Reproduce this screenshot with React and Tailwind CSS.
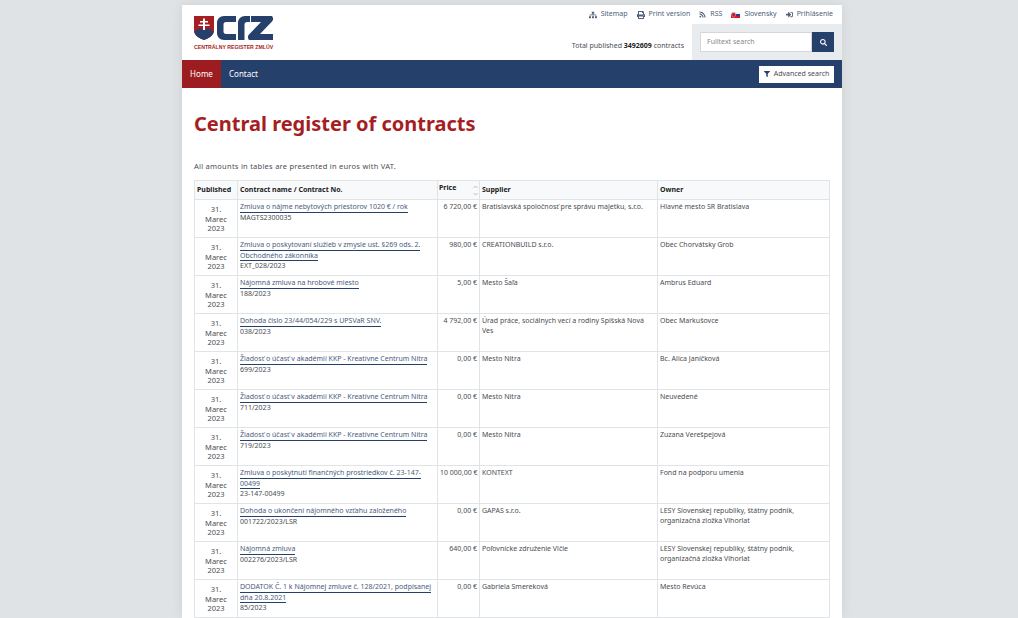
import React from 'react';
import { FaSitemap, FaPrint, FaRss, FaSignInAlt, FaSearch, FaFilter } from 'react-icons/fa';

const ROWS = [
  { name: ['Zmluva o nájme nebytových priestorov 1020 € / rok'], no: 'MAGTS2300035', price: '6 720,00 €', supplier: 'Bratislavská spoločnosť pre správu majetku, s.r.o.', owner: 'Hlavné mesto SR Bratislava' },
  { name: ['Zmluva o poskytovaní služieb v zmysle ust. §269 ods. 2.', 'Obchodného zákonníka'], no: 'EXT_028/2023', price: '980,00 €', supplier: 'CREATIONBUILD s.r.o.', owner: 'Obec Chorvátsky Grob' },
  { name: ['Nájomná zmluva na hrobové miesto'], no: '188/2023', price: '5,00 €', supplier: 'Mesto Šaľa', owner: 'Ambrus Eduard' },
  { name: ['Dohoda číslo 23/44/054/229 s UPSVaR SNV.'], no: '038/2023', price: '4 792,00 €', supplier: 'Úrad práce, sociálnych vecí a rodiny Spišská Nová Ves', owner: 'Obec Markušovce' },
  { name: ['Žiadosť o účasť v akadémií KKP - Kreatívne Centrum Nitra'], no: '699/2023', price: '0,00 €', supplier: 'Mesto Nitra', owner: 'Bc. Alica Janíčková' },
  { name: ['Žiadosť o účasť v akadémií KKP - Kreatívne Centrum Nitra'], no: '711/2023', price: '0,00 €', supplier: 'Mesto Nitra', owner: 'Neuvedené' },
  { name: ['Žiadosť o účasť v akadémií KKP - Kreatívne Centrum Nitra'], no: '719/2023', price: '0,00 €', supplier: 'Mesto Nitra', owner: 'Zuzana Verešpejová' },
  { name: ['Zmluva o poskytnutí finančných prostriedkov č. 23-147-', '00499'], no: '23-147-00499', price: '10 000,00 €', supplier: 'KONTEXT', owner: 'Fond na podporu umenia' },
  { name: ['Dohoda o ukončení nájomného vzťahu založeného'], no: '001722/2023/LSR', price: '0,00 €', supplier: 'GAPAS s.r.o.', owner: 'LESY Slovenskej republiky, štátny podnik, organizačná zložka Vihorlat' },
  { name: ['Nájomná zmluva'], no: '002276/2023/LSR', price: '640,00 €', supplier: 'Poľovnícke združenie Vlčie', owner: 'LESY Slovenskej republiky, štátny podnik, organizačná zložka Vihorlat' },
  { name: ['DODATOK Č. 1 k Nájomnej zmluve č. 128/2021, podpísanej', 'dňa 20.8.2021'], no: '85/2023', price: '0,00 €', supplier: 'Gabriela Smereková', owner: 'Mesto Revúca' },
];

const Logo = () => (
  <div className="w-[80px]">
    <svg width="80" height="26" viewBox="0 0 80 26" className="block">
      <path d="M0 0h20v14c0 6-5 8-10 10C5 22 0 20 0 14z" fill="#a51e22" />
      <path d="M0 15c3 0 4-2 5.500-3 1.500 0 3 2 4.500 2s3-2 4.500-2c1.500 1 2.500 3 5.500 3-1 5-5 7-10 9-5-2-9-4-10-9z" fill="#25406a" />
      <path d="M9 2.500h2v2.500h3v1.500h-3v2h4.500v1.500H11v4H9v-4H4.500V8.500H9v-2H6V5h3z" fill="#fff" />
      <path d="M42 0H30c-4 0-7 3-7 7v10c0 4 3 7 7 7h12v-6H32c-1.500 0-2.500-1-2.500-2.500v-7C29.500 7 30.500 6 32 6h10z" fill="#25406a" />
      <path d="M44 24V7c0-4 3-7 7-7h5v6h-3c-1.500 0-2.500 1-2.500 2.500V24z" fill="#25406a" />
      <path d="M57 0h21c1.500 2 1.500 4 0 5.500L66 18h13v6H55c-1.500-2-1.500-4 0-5.500L67 6H57z" fill="#25406a" />
    </svg>
    <div className="mt-[2px] text-[5.200px] font-bold leading-[7px] text-[#a51e22] whitespace-nowrap font-['Liberation_Sans',sans-serif]">CENTRÁLNY REGISTER ZMLÚV</div>
  </div>
);

const TopLink = ({ icon, children }) => (
  <a className="flex items-center gap-[4px] text-[#4f5f78]">
    {icon}
    <span>{children}</span>
  </a>
);

const Flag = () => (
  <svg width="9" height="6" viewBox="0 0 9 6" className="block">
    <rect width="9" height="2" fill="#f4f4f4" />
    <rect y="2" width="9" height="2" fill="#2a3f8f" />
    <rect y="4" width="9" height="2" fill="#d3162a" />
    <path d="M.8 .6h3.600v2.900C4.400 4.600 2.600 5.300 2.600 5.300S.8 4.600 .8 3.500z" fill="#d3162a" stroke="#fff" strokeWidth=".4" />
  </svg>
);

const SortIcon = () => (
  <svg width="5" height="11" viewBox="0 0 5 11" fill="none" stroke="#a9adb0" strokeWidth=".8" className="absolute right-[1px] top-[4px]">
    <path d="M.5 3 2.500 1 4.500 3M.5 8l2 2 2-2" />
  </svg>
);

const Row = ({ row }) => (
  <tr className="h-[38px]">
    <td className="border border-[#e0e4e6] px-[3px] pt-[5px] pb-0 align-top text-center text-[7.500px] leading-[9.500px]">
      31.<br />Marec<br />2023
    </td>
    <td className="border border-[#e0e4e6] px-[2px] pt-[2px] align-top leading-[10px]">
      {row.name.map((line) => (
        <div key={line} className="w-fit border-b border-[#25406a] leading-[9.500px] text-[#4a5d7e] whitespace-nowrap">{line}</div>
      ))}
      <div>{row.no}</div>
    </td>
    <td className="border border-[#e0e4e6] px-[2px] pt-[2px] align-top text-right leading-[10px] whitespace-nowrap">{row.price}</td>
    <td className="border border-[#e0e4e6] px-[2px] pt-[2px] align-top leading-[10px]">{row.supplier}</td>
    <td className="border border-[#e0e4e6] px-[2px] pt-[2px] align-top leading-[10px]">{row.owner}</td>
  </tr>
);

export default function App() {
  return (
    <div className="h-screen overflow-hidden bg-[#dfe3e6] pt-[5px] font-['Noto_Sans','Open_Sans',sans-serif] text-[7px] text-[#4a4d52] antialiased">
      <div className="ml-[182px] w-[660px] bg-white shadow-[0_0_12px_rgba(0,0,0,0.08)]">
        <header className="flex h-[55px] justify-between">
          <div className="pl-[12px] pt-[11px]"><Logo /></div>
          <div className="flex flex-col items-end">
            <div className="flex h-[19px] items-center gap-[9px] pr-[9px]">
              <TopLink icon={<FaSitemap className="h-[8px] w-[8px]" />}>Sitemap</TopLink>
              <TopLink icon={<FaPrint className="h-[8px] w-[8px]" />}>Print version</TopLink>
              <TopLink icon={<FaRss className="h-[7px] w-[7px]" />}>RSS</TopLink>
              <TopLink icon={<Flag />}>Slovensky</TopLink>
              <TopLink icon={<FaSignInAlt className="h-[7px] w-[7px]" />}>Prihlásenie</TopLink>
            </div>
            <div className="flex items-stretch">
              <div className="flex items-center pr-[8px] pt-[8px]">
                Total published&nbsp;<b className="text-[#222]">3492609</b>&nbsp;contracts
              </div>
              <div className="flex h-[36px] w-[150px] bg-[#e9ecef] pl-[8px] pt-[8px]">
                <div className="flex h-[20px] w-[112px] items-center border border-[#d4d8db] bg-white pl-[6px] text-[#888]">Fulltext search</div>
                <div className="flex h-[20px] w-[22px] items-center justify-center bg-[#25406a] text-white"><FaSearch className="h-[7px] w-[7px]" /></div>
              </div>
            </div>
          </div>
        </header>

        <nav className="flex h-[28px] items-center bg-[#25406a] text-[8px] text-white">
          <a className="flex h-full w-[39px] items-center justify-center bg-[#9d1c20]">Home</a>
          <a className="ml-[8px]">Contact</a>
          <a className="ml-auto mr-[8px] flex h-[17px] w-[75px] items-center justify-center gap-[4px] bg-white text-[7px] text-[#4a4d52]">
            <FaFilter className="h-[6px] w-[6px] text-[#25406a]" />Advanced search
          </a>
        </nav>

        <main className="px-[12px]">
          <h1 className="pt-[22px] text-[20px] font-bold leading-[28px] text-[#a51e22]">Central register of contracts</h1>
          <p className="mt-[22px] text-[7.500px] leading-[12px] tracking-[0.25px]">All amounts in tables are presented in euros with VAT.</p>
          <table className="mt-[8px] w-[635px] table-fixed border-collapse">
            <colgroup>
              <col className="w-[43px]" />
              <col className="w-[200px]" />
              <col className="w-[42px]" />
              <col className="w-[178px]" />
              <col className="w-[172px]" />
            </colgroup>
            <thead>
              <tr className="h-[19px] bg-[#f8f9fa] text-left font-bold text-[#222]">
                <th className="border border-[#e0e4e6] px-[2px] pt-[1px] whitespace-nowrap">Published</th>
                <th className="border border-[#e0e4e6] px-[2px] pt-[1px]">Contract name / Contract No.</th>
                <th className="relative border border-[#e0e4e6] px-[1px] pb-[3px]">
                  Price
                  <SortIcon />
                </th>
                <th className="border border-[#e0e4e6] px-[2px] pt-[1px]">Supplier</th>
                <th className="border border-[#e0e4e6] px-[2px] pt-[1px]">Owner</th>
              </tr>
            </thead>
            <tbody>
              {ROWS.map((row, i) => (
                <Row key={i} row={row} />
              ))}
            </tbody>
          </table>
        </main>
      </div>
    </div>
  );
}
